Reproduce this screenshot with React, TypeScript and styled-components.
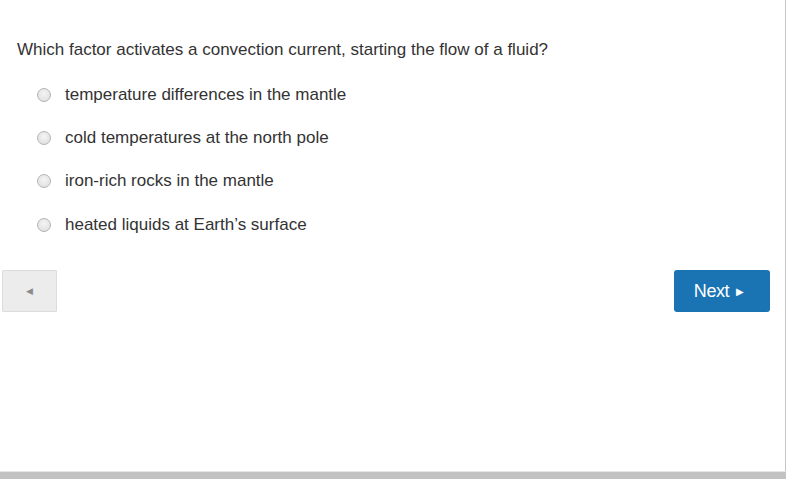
import React from "react";
import styled, { createGlobalStyle } from "styled-components";

const Global = createGlobalStyle`
  html, body { margin: 0; padding: 0; background: #fff; }
  body { font-family: Arial, "Liberation Sans", Helvetica, sans-serif; }
`;

const Page = styled.div`
  width: 786px;
  height: 479px;
  box-sizing: border-box;
  display: flex;
  flex-direction: column;
  overflow: hidden;
`;

const Panel = styled.div`
  flex: 1;
  border-right: 1px solid #c6c6c6;
  display: flex;
  flex-direction: column;
  padding: 40px 0 0 0;
`;

const Question = styled.div`
  font-size: 17px;
  line-height: 20px;
  color: #333;
  padding-left: 17px;
`;

const Options = styled.div`
  display: flex;
  flex-direction: column;
  padding: 13px 0 0 37px;
`;

const Option = styled.label`
  display: flex;
  align-items: center;
  height: 43.3px;
  font-size: 17px;
  color: #333;
  cursor: pointer;
`;

const Radio = styled.span`
  width: 12px;
  height: 12px;
  border-radius: 50%;
  border: 1px solid #b4b4b4;
  background: radial-gradient(circle at 50% 40%, #f4f4f4 0%, #dcdcdc 100%);
  margin-right: 14px;
  flex: none;
`;

const Nav = styled.div`
  display: flex;
  justify-content: space-between;
  align-items: center;
  padding: 0 15px 0 2px;
  margin-top: 24px;
`;

const PrevButton = styled.button`
  width: 55px;
  height: 42px;
  box-sizing: border-box;
  background: #ececec;
  border: 1px solid #dcdcdc;
  border-radius: 1px;
  display: flex;
  align-items: center;
  justify-content: center;
  padding: 0;
  color: #8a8a8a;
  font-size: 9px;
`;

const NextButton = styled.button`
  width: 96px;
  height: 42px;
  box-sizing: border-box;
  background: #1a73b3;
  border: none;
  border-radius: 3px;
  color: #fff;
  font-family: Arial, "Liberation Sans", sans-serif;
  font-size: 18px;
  letter-spacing: -0.4px;
  display: flex;
  align-items: center;
  justify-content: center;
  gap: 7px;
  padding: 0 6px 0 0;
`;

const Arrow = styled.span`
  font-size: 10px;
  letter-spacing: 0;
`;

const BottomBar = styled.div`
  height: 7px;
  background: #c2c2c2;
  border-top: 1px solid #e6e6e6;
  flex: none;
`;

const options = [
  "temperature differences in the mantle",
  "cold temperatures at the north pole",
  "iron-rich rocks in the mantle",
  "heated liquids at Earth\u2019s surface",
];

export default function App() {
  return (
    <Page>
      <Global />
      <Panel>
        <Question>
          Which factor activates a convection current, starting the flow of a fluid?
        </Question>
        <Options>
          {options.map((o) => (
            <Option key={o}>
              <Radio />
              {o}
            </Option>
          ))}
        </Options>
        <Nav>
          <PrevButton>◀</PrevButton>
          <NextButton>
            Next <Arrow>▶</Arrow>
          </NextButton>
        </Nav>
      </Panel>
      <BottomBar />
    </Page>
  );
}
